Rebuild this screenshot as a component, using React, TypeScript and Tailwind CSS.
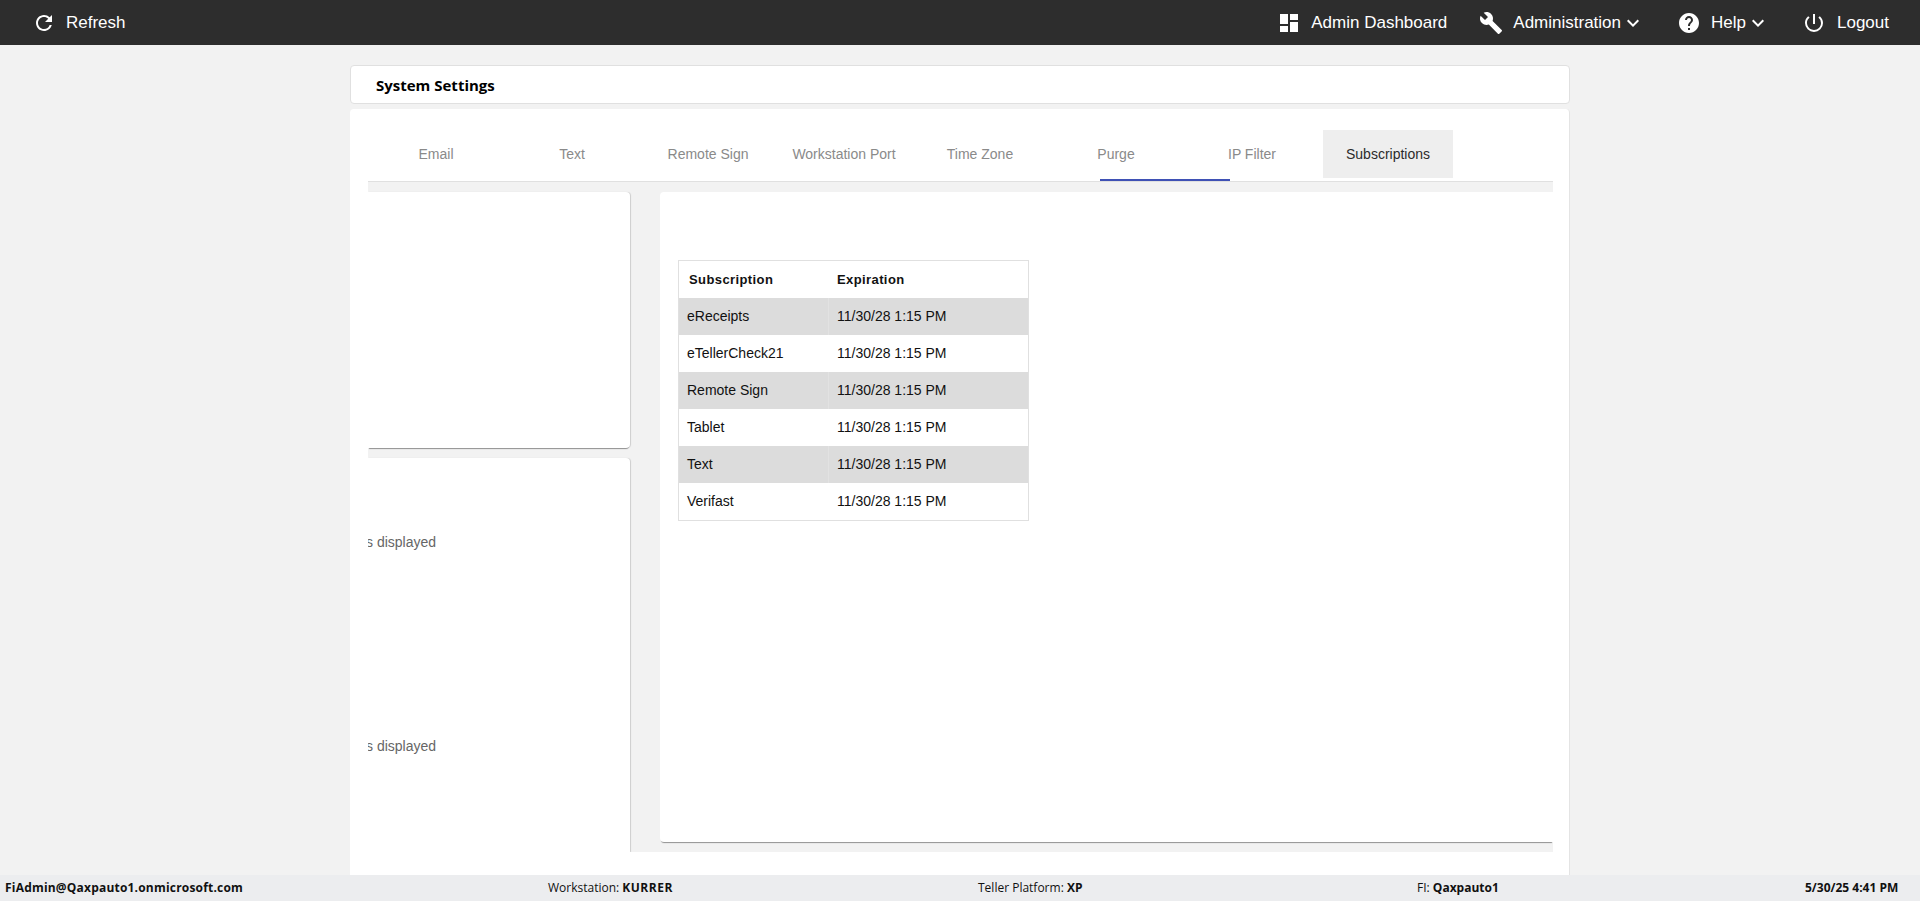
import {
  MdBuild,
  MdDashboard,
  MdExpandMore,
  MdHelp,
  MdPowerSettingsNew,
  MdRefresh,
} from "react-icons/md";

const tabs = [
  "Email",
  "Text",
  "Remote Sign",
  "Workstation Port",
  "Time Zone",
  "Purge",
  "IP Filter",
  "Subscriptions",
];

const subscriptions = [
  "eReceipts",
  "eTellerCheck21",
  "Remote Sign",
  "Tablet",
  "Text",
  "Verifast",
];

const TopBar = () => (
  <header className="flex h-[45px] items-center justify-between bg-[#2d2d2d] pl-[32px] pr-[31px] text-[17px] text-white">
    <div className="flex items-center gap-[10px]">
      <MdRefresh size={24} />
      <span>Refresh</span>
    </div>
    <div className="flex items-center gap-8">
      <div className="flex items-center gap-[10px]">
        <MdDashboard size={24} />
        <span>Admin Dashboard</span>
      </div>
      <div className="flex items-center">
        <MdBuild size={24} className="mr-[10px]" />
        <span>Administration</span>
        <MdExpandMore size={24} />
      </div>
      <div className="flex items-center">
        <MdHelp size={24} className="mr-[10px]" />
        <span>Help</span>
        <MdExpandMore size={24} />
      </div>
      <div className="flex items-center gap-[11px]">
        <MdPowerSettingsNew size={24} />
        <span>Logout</span>
      </div>
    </div>
  </header>
);

const Tabs = () => (
  <div className="relative h-[52px] border-b border-[#e0e0e0]">
    <div className="flex gap-[6px] pl-[3px]">
      {tabs.map((tab) => (
        <div
          key={tab}
          className={
            tab === "Subscriptions"
              ? "flex h-[48px] w-[130px] items-center justify-center bg-[#eeeeee] text-[#2b2b2b]"
              : "flex h-[48px] w-[130px] items-center justify-center text-[#8a8a8a]"
          }
        >
          {tab}
        </div>
      ))}
    </div>
    <div className="absolute bottom-0 left-[732px] h-[2px] w-[130px] bg-[#3f51b5]"></div>
  </div>
);

const SubscriptionTable = () => (
  <div className="w-[351px] border border-[#e0e0e0] text-[#111111]">
    <div className="flex h-[37px] items-center bg-white text-[13px] font-bold tracking-[0.4px]">
      <div className="w-[150px] pl-[10px]">Subscription</div>
      <div className="pl-[8px]">Expiration</div>
    </div>
    {subscriptions.map((name, index) => (
      <div
        key={name}
        className={
          index % 2 === 0
            ? "flex h-[37px] items-center bg-[#dcdcdc]"
            : "flex h-[37px] items-center bg-white"
        }
      >
        <div
          className={
            index % 2 === 0
              ? "flex h-full w-[150px] items-center border-r border-[#e2e2e2] pl-[8px]"
              : "flex h-full w-[150px] items-center pl-[8px]"
          }
        >
          {name}
        </div>
        <div className="pl-[8px]">11/30/28 1:15 PM</div>
      </div>
    ))}
  </div>
);

const Footer = () => (
  <footer className="flex h-[26px] items-center bg-[#ecedef] text-[12px] text-[#111111] font-['Open_Sans',sans-serif]">
    <div className="ml-[5px] w-[543px] font-bold tracking-[0.2px]">
      FiAdmin@Qaxpauto1.onmicrosoft.com
    </div>
    <div className="w-[430px]">
      Workstation: <b className="tracking-[0.5px]">KURRER</b>
    </div>
    <div className="w-[439px]">
      Teller Platform: <b>XP</b>
    </div>
    <div className="w-[388px]">
      FI: <b>Qaxpauto1</b>
    </div>
    <div className="font-bold">5/30/25 4:41 PM</div>
  </footer>
);

export default function App() {
  return (
    <div className="flex h-[901px] flex-col overflow-hidden bg-[#f2f2f2] font-['Liberation_Sans',Arial,sans-serif] text-[14px]">
      <TopBar />

      <main className="mx-auto flex w-[1220px] flex-1 flex-col pt-[20px]">
        <div className="flex h-[39px] items-center rounded-[4px] border border-[#e0e0e0] bg-white pl-[25px] pt-[2px] text-[15px] font-bold text-black font-['Open_Sans',sans-serif]">
          System Settings
        </div>

        <div className="mt-[5px] flex flex-1 flex-col rounded-t-[4px] border-r border-[#e4e4e4] bg-white pb-[23px] pl-[18px] pr-[16px] pt-[21px]">
          <Tabs />

          <div className="flex flex-1 overflow-hidden bg-[#f2f2f2] pt-[10px]">
            <div className="flex w-[262px] flex-col gap-[10px]">
              <div className="h-[256px] rounded-r-[4px] bg-white shadow-[0_2px_1px_-1px_rgba(0,0,0,0.4),1px_0_1px_rgba(0,0,0,0.15)]"></div>
              <div className="flex-1 rounded-tr-[4px] bg-white text-[#666666] shadow-[1px_0_1px_rgba(0,0,0,0.15)]">
                <p className="-ml-[2px] pt-[74px]">s displayed</p>
                <p className="-ml-[2px] pt-[183px]">s displayed</p>
              </div>
            </div>
            <div className="ml-[30px] mb-[10px] flex-1 rounded-l-[4px] bg-white pl-[18px] pt-[68px] shadow-[0_2px_1px_-1px_rgba(0,0,0,0.4)]">
              <SubscriptionTable />
            </div>
          </div>
        </div>
      </main>

      <Footer />
    </div>
  );
}
